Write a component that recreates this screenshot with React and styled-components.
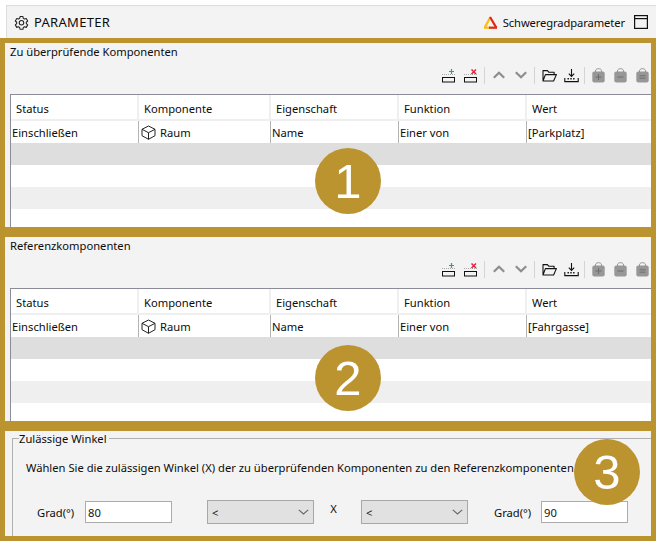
import React from "react";
import styled, { createGlobalStyle } from "styled-components";

const Global = createGlobalStyle`
  html, body { margin: 0; padding: 0; background: #fff; }
  body { font-family: "Noto Sans", "Open Sans", sans-serif; font-size: 11.2px; color: #0c0c0c; }
  * { box-sizing: border-box; }
`;
const Page = styled.div`
  width: 656px; height: 541px; padding-top: 5px; overflow: hidden; display: flex; flex-direction: column;
`;
const TopBar = styled.header`
  height: 33px; margin-left: 6px; padding: 0 8px 0 7px; display: flex; align-items: center;
  background: #f3f3f3; border-top: 1px solid #dcdcdc; border-left: 1px solid #dcdcdc;
`;
const TopTitle = styled.span`
  margin-left: 5px; font-size: 13px; letter-spacing: .3px; flex: 1;
`;
const TopLabel = styled.span`
  margin: 0 9px 0 5px; letter-spacing: -.1px;
`;
const Section = styled.section`
  position: relative; height: ${p => p.$h}px; border: 5px solid #bb932f; background: #f3f3f3; overflow: hidden;
  display: flex; flex-direction: column;
`;
const SectionTitle = styled.div`
  height: 17px; padding: 1px 0 0 5px; line-height: 16px;
`;
const Toolbar = styled.div`
  height: 30px; margin-bottom: 4px; padding-right: 2px; display: flex; align-items: center; justify-content: flex-end; gap: 8px;
`;
const ToolGroup = styled.div`
  display: flex; align-items: center; gap: ${p => p.$gap}px;
`;
const Sep = styled.i`
  width: 1px; height: 17px; background: #d4d4d4; margin: 0 ${p => p.$mr || 0}px 0 ${p => p.$ml || 0}px;
`;
const Table = styled.div`
  margin-left: 5px; flex: 1; background: #fff; border-top: 1px solid #8c8c98; border-left: 1px solid #8c8c98; overflow: hidden;
`;
const Row = styled.div`
  display: grid; grid-template-columns: 128px 132px 128px 128px 1fr; height: 22px; background: ${p => p.$bg || "#fff"};
`;
const HeadRow = styled(Row)`
  height: 26px; border-bottom: 2px solid #efefef;
`;
const HeadCell = styled.div`
  padding: 2px 0 0 5px; line-height: 23px; border-right: 2px solid #efefef;
  &:last-child { border-right: 0; }
`;
const Cell = styled.div`
  padding: 1px 0 0 1px; line-height: 21px; display: flex; align-items: center; gap: 4px; border-right: 1px solid #b4b4b4;
  &:last-child { border-right: 0; }
`;
const Fieldset = styled.fieldset`
  margin: 0 -12px -20px 7px; padding: 0 0 0 13px; border: 1px solid #b0b0b0; min-width: 0; flex: 1;
`;
const Legend = styled.legend`
  margin-left: -7px; padding: 0 2px 0 0; line-height: 15px; white-space: nowrap;
`;
const Prompt = styled.p`
  margin: 14px 0 0 0; line-height: 16px;
`;
const Controls = styled.div`
  margin: 24px 0 0 11px; display: flex; align-items: center;
`;
const Caption = styled.span`
  width: ${p => p.$w}px; flex: none; padding: 0 ${p => p.$pr || 0}px ${p => p.$pb || 0}px ${p => p.$pl || 0}px; text-align: ${p => p.$align || "left"};
`;
const Input = styled.input`
  width: 87px; height: 22px; flex: none; border: 1px solid #ababab; background: #fff; padding: 0 2px; font: inherit; color: #141414; outline: none;
`;
const Select = styled.div`
  width: 107px; height: 24px; flex: none; margin-left: ${p => p.$ml}px; display: flex; align-items: center; justify-content: space-between;
  border: 1px solid #a8a8a8; background: #e1e1e1; padding: 0 4px 0 4px;
`;
const Badge = styled.div`
  position: absolute; left: ${p => p.$x}px; top: ${p => p.$y}px; width: 66px; height: 66px; border-radius: 50%; background: #bb932f;
  color: #fff; font-family: "Liberation Sans", sans-serif; font-size: 49px; line-height: 66px; text-align: center;
`;

const Gear = () => (
  <svg width="15" height="15" viewBox="0 0 24 24" fill="none" stroke="#222" strokeWidth="1.7" strokeLinejoin="round">
    <path d="M9.7 2.5h4.6l.6 2.9 1.9 1.1 2.8-.9 2.3 4-2.2 2 0 2.2 2.2 2-2.3 4-2.8-.9-1.9 1.1-.6 2.9H9.7l-.6-2.9-1.9-1.1-2.8.9-2.3-4 2.2-2V11.6L2.1 9.6l2.3-4 2.8.9 1.9-1.1z" />
    <circle cx="12" cy="12.4" r="3.6" />
  </svg>
);
const Tri = () => (
  <svg width="15" height="14" viewBox="0 0 15 14" fill="none" strokeWidth="2.2">
    <path d="M7.5 2 1.7 12.6" stroke="#f8bd18" />
    <path d="M7 2 13.3 12.6" stroke="#e3290f" />
    <path d="M1 12.7h6" stroke="#f8bd18" />
    <path d="M6 12.7h8" stroke="#e3290f" />
  </svg>
);
const WindowIcon = () => (
  <svg width="14" height="14" viewBox="0 0 14 14" fill="none" stroke="#111" strokeWidth="1.2">
    <rect x=".6" y=".6" width="12.8" height="12.8" />
    <path d="M.6 3.6h12.8" />
  </svg>
);
const RowEdit = ({ kind }) => (
  <svg width="13" height="15" viewBox="0 0 13 15" fill="none" style={{ flex: "none" }}>
    <path d="M0 6.5h13" stroke="#aaa" strokeDasharray="1 1" />
    <rect x=".5" y="9.5" width="12" height="4.5" stroke="#111" />
    {kind === "add"
      ? <path d="M9.5 1v5M7 3.5h5" stroke="#12b27a" strokeWidth="1.2" />
      : <path d="M7.5 1.5l4.5 4.5M12 1.5 7.5 6" stroke="#e8203c" strokeWidth="1.5" />}
  </svg>
);
const Chev = ({ down }) => (
  <svg width="12" height="8" viewBox="0 0 12 8" fill="none" stroke="#8d8d8d" strokeWidth="2.2" style={{ flex: "none" }}>
    <path d={down ? "M.8 1.2 6 6.2 11.2 1.2" : "M.8 6.8 6 1.8 11.2 6.8"} />
  </svg>
);
const Folder = () => (
  <svg width="15" height="13" viewBox="0 0 15 13" fill="none" stroke="#111" strokeWidth="1.1" strokeLinejoin="round" style={{ flex: "none" }}>
    <path d="M1 12V1.6h4.4l1.3 1.6h5.4V5.6M1 12h10.6L14.4 5.6H3.4z" />
  </svg>
);
const Download = () => (
  <svg width="15" height="15" viewBox="0 0 15 15" fill="none" stroke="#111" strokeWidth="1.1" style={{ flex: "none" }}>
    <path d="M7.5 1v7M4.8 5.6 7.5 8.4l2.7-2.8" />
    <path d="M.8 10v3.6h13.4V10" />
    <path d="M3.5 10.8h8" strokeDasharray="1.4 1.4" strokeWidth="1.4" />
  </svg>
);
const Bag = ({ mark }) => (
  <svg width="13" height="15" viewBox="0 0 13 15" style={{ flex: "none" }}>
    <path d="M3.5 4V2.8C3.5 1.4 5 .7 6.5.7S9.5 1.4 9.5 2.8V4" fill="none" stroke="#8f8f8f" />
    <rect x=".3" y="3.4" width="12.4" height="11.2" rx="2" fill="#979797" />
    <path d={mark} stroke="#6e6e6e" fill="none" />
  </svg>
);
const Cube = () => (
  <svg width="15" height="15" viewBox="0 0 15 15" fill="none" stroke="#222" strokeWidth="1" strokeLinejoin="round" style={{ flex: "none", marginLeft: "1px" }}>
    <path d="M7.5 1 14 4.3v6.4l-6.5 3.6L1 10.7V4.3zM1 4.3l6.5 3.4L14 4.3M7.5 7.7v6.6" />
  </svg>
);
const Caret = () => (
  <svg width="11" height="6" viewBox="0 0 11 6" fill="none" stroke="#666" strokeWidth="1.1">
    <path d="M.8.8 5.5 5 10.2.8" />
  </svg>
);

const Tools = () => (
  <Toolbar>
    <ToolGroup $gap={9}><RowEdit kind="add" /><RowEdit kind="del" /></ToolGroup>
    <Sep $ml={-1} />
    <ToolGroup $gap={10}><Chev /><Chev down /></ToolGroup>
    <Sep $ml={-1} $mr={-1} />
    <ToolGroup $gap={7}><Folder /><Download /></ToolGroup>
    <Sep $ml={-3} $mr={-1} />
    <ToolGroup $gap={9}>
      <Bag mark="M6.5 6v6M3.5 9h6" /><Bag mark="M3.5 9h6" /><Bag mark="M3.5 7.8h6M3.5 10.2h6" />
    </ToolGroup>
  </Toolbar>
);
const heads = ["Status", "Komponente", "Eigenschaft", "Funktion", "Wert"];
const Grid = ({ value }) => (
  <Table>
    <HeadRow>{heads.map(h => <HeadCell key={h}>{h}</HeadCell>)}</HeadRow>
    <Row>
      <Cell>Einschließen</Cell>
      <Cell><Cube />Raum</Cell>
      <Cell>Name</Cell>
      <Cell>Einer von</Cell>
      <Cell>{value}</Cell>
    </Row>
    <Row $bg="#dedede" />
    <Row />
    <Row $bg="#efefef" />
    <Row />
  </Table>
);

export default function App() {
  return (
    <Page>
      <Global />
      <TopBar>
        <Gear /><TopTitle>PARAMETER</TopTitle>
        <Tri /><TopLabel>Schweregradparameter</TopLabel><WindowIcon />
      </TopBar>
      <Section $h={194}>
        <SectionTitle>Zu überprüfende Komponenten</SectionTitle>
        <Tools />
        <Grid value="[Parkplatz]" />
        <Badge $x={310} $y={105}>1</Badge>
      </Section>
      <Section $h={194}>
        <SectionTitle>Referenzkomponenten</SectionTitle>
        <Tools />
        <Grid value="[Fahrgasse]" />
        <Badge $x={310} $y={108}>2</Badge>
      </Section>
      <Section $h={115}>
        <Fieldset>
          <Legend>Zulässige Winkel</Legend>
          <Prompt>Wählen Sie die zulässigen Winkel (X) der zu überprüfenden Komponenten zu den Referenzkomponenten</Prompt>
          <Controls>
            <Caption $w={48}>Grad(°)</Caption>
            <Input defaultValue="80" readOnly />
            <Select $ml={35}><span>&lt;</span><Caret /></Select>
            <Caption $w={47} $align="center" $pr={8} $pb={8}>X</Caption>
            <Select $ml={0}><span>&lt;</span><Caret /></Select>
            <Caption $w={73} $pl={26}>Grad(°)</Caption>
            <Input defaultValue="90" readOnly />
          </Controls>
        </Fieldset>
        <Badge $x={569} $y={8}>3</Badge>
      </Section>
    </Page>
  );
}
